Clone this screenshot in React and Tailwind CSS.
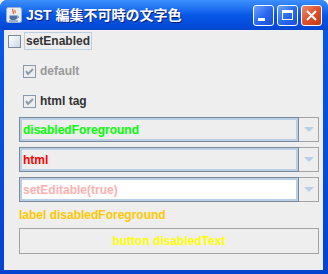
const font = { fontFamily: '"Liberation Sans", "Noto Sans CJK JP", sans-serif' };

function CheckBox({ checked, disabled }) {
  return (
    <div
      className={`w-[13px] h-[13px] border flex items-center justify-center ${
        disabled ? 'border-[#8a9aac] bg-[#eeeeee]' : 'border-[#7a8a99] bg-gradient-to-br from-white to-[#c8d8ea]'
      }`}
    >
      {checked && (
        <svg width="11" height="11" viewBox="0 0 11 11">
          <path d="M2 5 L4 8 L9 3" fill="none" stroke="#8a9aac" strokeWidth="2" />
        </svg>
      )}
    </div>
  );
}

function Combo({ text, color, white }) {
  return (
    <div className="flex h-[25px] w-[300px]">
      <div
        className={`flex-1 border border-[#7a8a99] flex items-stretch ${white ? 'bg-white' : 'bg-[#eeeeee]'}`}
      >
        <div className="flex-1 border-2 border-[#b8cfe5] flex items-center pl-[1px]">
          <span className="text-[12px] font-bold leading-none" style={{ color }}>
            {text}
          </span>
        </div>
      </div>
      <div className="w-[20px] border border-l-0 border-[#a3a3a3] bg-[#eeeeee] flex items-center justify-center">
        <svg width="10" height="6" viewBox="0 0 10 6">
          <path d="M0 0 H10 L5 5 Z" fill="#b8cfe5" />
        </svg>
      </div>
    </div>
  );
}

function TitleButton({ children, red }) {
  return (
    <div
      className={`w-[21px] h-[21px] rounded-[3px] border border-white flex items-center justify-center ${
        red ? 'bg-gradient-to-br from-[#e88a6c] via-[#e0502a] to-[#c23a10]' : 'bg-gradient-to-br from-[#6ea2f8] via-[#2a6af0] to-[#1a4ed8]'
      }`}
    >
      {children}
    </div>
  );
}

export default function App() {
  return (
    <div
      className="w-[328px] h-[274px] flex flex-col rounded-t-[7px] overflow-hidden bg-gradient-to-b from-[#0a5ae8] to-[#0343d0]"
      style={font}
    >
      {/* title bar */}
      <div className="h-[30px] flex items-center pl-[6px] pr-[6px] bg-gradient-to-b from-[#3d8ffb] via-[#0758e8] to-[#0346d2]">
        <svg width="16" height="16" viewBox="0 0 16 16">
          <rect x="0.5" y="0.5" width="15" height="15" rx="2" fill="#e8eef8" stroke="#9bb0d0" />
          <path d="M7 2 C5 4 9 5 7 7 M9 3 C8 4 10 5 9 6" fill="none" stroke="#e06020" strokeWidth="1.2" />
          <path d="M3.5 8.5 H11 V11 C11 12.5 9.5 13 7.2 13 C5 13 3.5 12.5 3.5 11 Z" fill="#5070a0" />
          <path d="M11 9 C13 9 13 11 11 11" fill="none" stroke="#5070a0" strokeWidth="1" />
          <rect x="3" y="13.5" width="9" height="1" fill="#5070a0" />
        </svg>
        <span
          className="ml-[4px] text-white text-[14px] font-bold leading-none"
          style={{ textShadow: '1px 1px 0 #0a1e78' }}
        >
          JST 編集不可時の文字色
        </span>
        <div className="ml-auto flex gap-[3px] pr-[0px]">
          <TitleButton>
            <div className="w-[7px] h-[3px] bg-white mt-[8px] mr-[4px]" />
          </TitleButton>
          <TitleButton>
            <div className="w-[11px] h-[10px] border border-white border-t-[3px]" />
          </TitleButton>
          <TitleButton red>
            <svg width="11" height="11" viewBox="0 0 11 11">
              <path d="M1 1 L10 10 M10 1 L1 10" stroke="white" strokeWidth="2" />
            </svg>
          </TitleButton>
        </div>
      </div>

      {/* content */}
      <div className="flex-1 ml-[4px] mr-[5px] mb-[4px] bg-[#eeeeee] flex flex-col">
        <div className="mt-[1px] h-[20px] flex items-center pl-[4px]">
          <CheckBox />
          <div className="ml-[3px] h-[18px] px-[1px] border border-[#b8cfe5] flex items-center">
            <span className="text-[12px] font-bold text-[#333333] leading-none">setEnabled</span>
          </div>
        </div>
        <div className="mt-[10px] h-[20px] flex items-center pl-[19px]">
          <CheckBox checked disabled />
          <span className="ml-[4px] text-[12px] font-bold text-[#999999] leading-none">default</span>
        </div>
        <div className="mt-[10px] h-[20px] flex items-center pl-[19px]">
          <CheckBox checked disabled />
          <span className="ml-[4px] text-[12px] font-bold text-[#333333] leading-none">html tag</span>
        </div>

        <div className="mt-[6px] pl-[15px] flex flex-col gap-[5px]">
          <Combo text="disabledForeground" color="#00ff00" />
          <Combo text="html" color="#ff0000" />
          <Combo text="setEditable(true)" color="#ffafaf" white />
        </div>

        <div className="h-[26px] pl-[15px] flex items-center">
          <span className="text-[12px] font-bold text-[#ffc800] leading-none">label disabledForeground</span>
        </div>

        <div className="ml-[15px] w-[300px] h-[26px] border border-[#a3a3a3] flex items-center justify-center">
          <span className="text-[12px] font-bold text-[#ffff00] leading-none">button disabledText</span>
        </div>
      </div>
    </div>
  );
}
